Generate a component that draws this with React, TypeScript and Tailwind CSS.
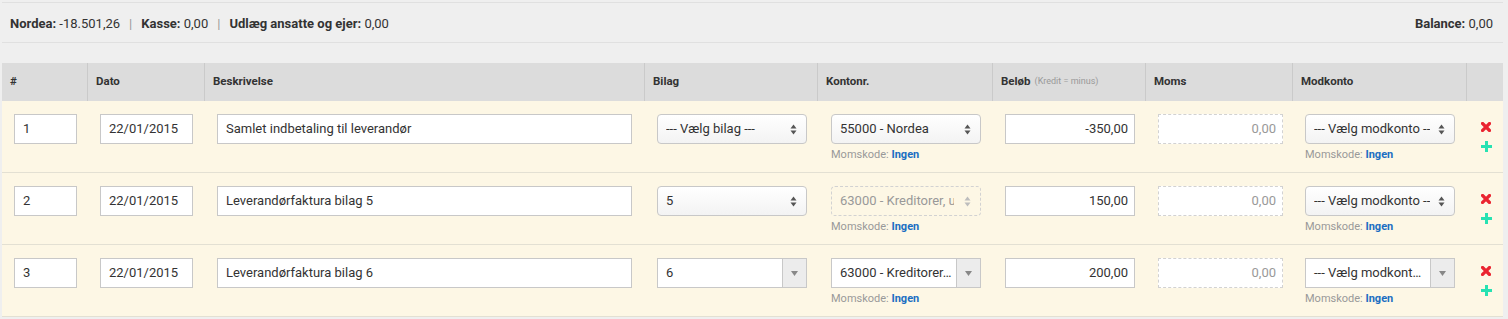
import React from 'react';

type SelectKind = 'native' | 'disabled' | 'select2';

type Row = {
  nr: string;
  date: string;
  text: string;
  bilag: { kind: SelectKind; label: string };
  konto: { kind: SelectKind; label: string };
  amount: string;
  modkonto: { kind: SelectKind; label: string };
};

const ROWS: Row[] = [
  {
    nr: '1',
    date: '22/01/2015',
    text: 'Samlet indbetaling til leverandør',
    bilag: { kind: 'native', label: '--- Vælg bilag ---' },
    konto: { kind: 'native', label: '55000 - Nordea' },
    amount: '-350,00',
    modkonto: { kind: 'native', label: '--- Vælg modkonto ---' },
  },
  {
    nr: '2',
    date: '22/01/2015',
    text: 'Leverandørfaktura bilag 5',
    bilag: { kind: 'native', label: '5' },
    konto: { kind: 'disabled', label: '63000 - Kreditorer, udenlandske' },
    amount: '150,00',
    modkonto: { kind: 'native', label: '--- Vælg modkonto ---' },
  },
  {
    nr: '3',
    date: '22/01/2015',
    text: 'Leverandørfaktura bilag 6',
    bilag: { kind: 'select2', label: '6' },
    konto: { kind: 'select2', label: '63000 - Kreditorer, udenlandske' },
    amount: '200,00',
    modkonto: { kind: 'select2', label: '--- Vælg modkonto ---' },
  },
];

const COLS = 'grid grid-cols-[86px_117px_440px_173px_175px_153px_147px_174px_36px]';

function Arrows({ light }: { light?: boolean }) {
  const fill = light ? '#bdbdbd' : '#555';
  return (
    <svg width="7" height="11" viewBox="0 0 7 11" className="shrink-0">
      <path d="M3.5 0.5 L6.5 4.5 L0.5 4.5 Z" fill={fill} />
      <path d="M3.5 10.5 L6.5 6.5 L0.5 6.5 Z" fill={fill} />
    </svg>
  );
}

function Select({ kind, label }: { kind: SelectKind; label: string }) {
  if (kind === 'select2') {
    return (
      <div className="flex h-[30px] w-[150px] border border-[#c8c8c8] bg-white text-[13px] text-[#333]">
        <div className="min-w-0 flex-1 truncate pl-[8px] pr-[4px] leading-[28px]">{label}</div>
        <div className="flex w-[24px] items-center justify-center border-l border-[#c8c8c8] bg-[#ececec]">
          <svg width="7" height="5" viewBox="0 0 7 5">
            <path d="M0 0 L7 0 L3.5 5 Z" fill="#888" />
          </svg>
        </div>
      </div>
    );
  }
  if (kind === 'disabled') {
    return (
      <div className="flex h-[30px] w-[150px] items-center rounded-[4px] border border-dashed border-[#d2d2d2] pl-[8px] pr-[9px] text-[13px] text-[#999]">
        <div className="min-w-0 flex-1 overflow-hidden whitespace-nowrap">{label}</div>
        <span className="ml-[10px]"><Arrows light /></span>
      </div>
    );
  }
  return (
    <div className="flex h-[30px] w-[150px] items-center rounded-[4px] border border-[#c8c8c8] bg-gradient-to-b from-white to-[#f3f3f3] pl-[8px] pr-[9px] text-[13px] text-[#333]">
      <div className="min-w-0 flex-1 overflow-hidden whitespace-nowrap">{label}</div>
      <span className="ml-[8px]"><Arrows /></span>
    </div>
  );
}

function Momskode() {
  return (
    <div className="mt-[3px] text-[11px] leading-[16px] text-[#999]">
      Momskode: <span className="font-bold text-[#1b6ec2]">Ingen</span>
    </div>
  );
}

function Input({ value, w, right }: { value: string; w: string; right?: boolean }) {
  return (
    <div
      className={`${w} h-[30px] border border-[#c8c8c8] bg-white text-[13px] leading-[28px] text-[#333] ${
        right ? 'pr-[6px] text-right' : 'pl-[8px]'
      }`}
    >
      {value}
    </div>
  );
}

function Cell({ children, last }: { children?: React.ReactNode; last?: boolean }) {
  return <div className={`pt-[13px] ${last ? '' : 'pl-[12px]'}`}>{children}</div>;
}

export default function App() {
  const headers = ['#', 'Dato', 'Beskrivelse', 'Bilag', 'Kontonr.', 'Beløb', 'Moms', 'Modkonto', ''];

  return (
    <div className="min-h-[319px] bg-[#efefef] pl-[2px] pr-[5px] pt-[2px] font-['Roboto',sans-serif]">
      <div className="flex h-[41px] items-center justify-between border-y border-[#e0e0e0] pl-[8px] pr-[10px] pt-[3px] text-[13px] text-[#333]">
        <div>
          <b>Nordea:</b> -18.501,26
          <span className="mx-[9px] text-[#999]">|</span>
          <b>Kasse:</b> 0,00
          <span className="mx-[9px] text-[#999]">|</span>
          <b>Udlæg ansatte og ejer:</b> 0,00
        </div>
        <div>
          <b>Balance:</b> 0,00
        </div>
      </div>

      <div className="mt-[20px]">
        <div className={`${COLS} h-[38px] bg-[#dcdcdc] text-[11.5px] font-bold text-[#333]`}>
          {headers.map((h, i) => (
            <div
              key={i}
              className={`flex items-center pl-[8px] ${i < headers.length - 1 ? 'border-r border-[#cacaca]' : ''}`}
            >
              {h}
              {h === 'Beløb' && (
                <span className="ml-[4px] text-[9px] font-normal text-[#999]">(Kredit = minus)</span>
              )}
            </div>
          ))}
        </div>

        {ROWS.map((r) => (
          <div key={r.nr} className={`${COLS} h-[72px] border-b border-[#e3e0d3] bg-[#fdf7e5]`}>
            <Cell><Input value={r.nr} w="w-[63px]" /></Cell>
            <Cell><Input value={r.date} w="w-[93px]" /></Cell>
            <Cell><Input value={r.text} w="w-[415px]" /></Cell>
            <Cell><Select {...r.bilag} /></Cell>
            <Cell>
              <div className="pl-[1px]">
                <Select {...r.konto} />
                <Momskode />
              </div>
            </Cell>
            <Cell><Input value={r.amount} w="w-[130px]" right /></Cell>
            <Cell>
              <div className="h-[30px] w-[125px] border border-dashed border-[#d2d2d2] bg-white pr-[6px] text-right text-[13px] leading-[28px] text-[#999]">
                0,00
              </div>
            </Cell>
            <Cell>
              <Select {...r.modkonto} />
              <Momskode />
            </Cell>
            <div className="flex flex-col items-center pt-[21px]">
              <svg width="10" height="10" viewBox="0 0 10 10" className="ml-[2px]">
                <path d="M1.5 1.5 L8.5 8.5 M8.5 1.5 L1.5 8.5" stroke="#ea2430" strokeWidth="3.2" strokeLinecap="square" />
              </svg>
              <svg width="11" height="11" viewBox="0 0 11 11" className="ml-[2px] mt-[9px]">
                <path d="M5.5 0 V11 M0 5.5 H11" stroke="#27e2b2" strokeWidth="3" />
              </svg>
            </div>
          </div>
        ))}
      </div>
    </div>
  );
}
